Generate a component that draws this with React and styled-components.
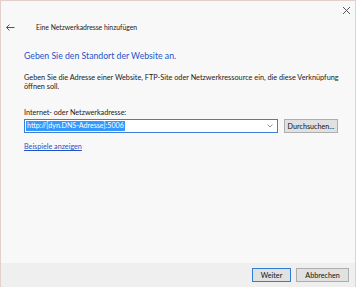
import React from "react";
import styled, { createGlobalStyle } from "styled-components";

const GlobalStyle = createGlobalStyle`
  html, body {
    margin: 0;
    padding: 0;
    background: #f8f8f8;
  }
  #root {
    width: 356px;
    height: 287px;
  }
`;

const Window = styled.div`
  box-sizing: border-box;
  width: 356px;
  height: 287px;
  border: 1px solid #e3cfcc;
  border-bottom: none;
  background: #f8f8f8;
  display: flex;
  flex-direction: column;
  font-family: Lato, "Liberation Sans", sans-serif;
  color: #1a1a1a;
  position: relative;
`;

const Close = styled.button`
  position: absolute;
  top: 3px;
  right: 3px;
  width: 12px;
  height: 12px;
  padding: 0;
  border: none;
  background: none;
  display: flex;
  align-items: center;
  justify-content: center;
`;

const TitleBar = styled.div`
  display: flex;
  align-items: center;
  height: 14px;
  margin-top: 19px;
  padding-left: 5px;
`;

const Back = styled.span`
  width: 30px;
  display: flex;
  align-items: center;
`;

const TitleText = styled.span`
  font-size: 6.8px;
  color: #222;
`;

const Body = styled.div`
  flex: 1;
  padding: 16px 0 0 23px;
  display: flex;
  flex-direction: column;
`;

const Heading = styled.h1`
  margin: 0;
  font-size: 8.7px;
  font-weight: 400;
  color: #1f54c9;
  line-height: 12px;
`;

const Text = styled.p`
  margin: 11px 0 0;
  font-size: 7.3px;
  line-height: 9px;
  width: 322px;
`;

const Label = styled.div`
  margin-top: 17px;
  font-size: 7.2px;
  line-height: 10px;
`;

const Row = styled.div`
  display: flex;
  align-items: center;
  gap: 6px;
  margin-top: 1px;
`;

const Combo = styled.div`
  box-sizing: border-box;
  width: 254px;
  height: 14px;
  border: 1px solid #3d7fd4;
  background: #fff;
  display: flex;
  align-items: center;
  padding: 0 4px 0 1px;
`;

const Selected = styled.span`
  background: #3399ff;
  color: #fff;
  font-size: 7.1px;
  line-height: 10px;
  padding: 0 1px;
`;

const Chevron = styled.span`
  margin-left: auto;
  display: flex;
`;

const Button = styled.button`
  box-sizing: border-box;
  height: 14px;
  padding: 0 3px;
  font-family: Lato, "Liberation Sans", sans-serif;
  font-size: 7.2px;
  color: #111;
  background: #e1e1e1;
  border: 1px solid ${(p) => (p.primary ? "#2f7bd8" : "#adadad")};
  width: ${(p) => p.w}px;
  display: flex;
  align-items: center;
  justify-content: center;
`;

const Link = styled.a`
  margin-top: 9px;
  font-size: 7.2px;
  line-height: 10px;
  color: #1f54c9;
  text-decoration: underline;
`;

const Footer = styled.div`
  height: 24px;
  background: #efefef;
  display: flex;
  justify-content: flex-end;
  align-items: flex-start;
  gap: 5px;
  padding: 5px 6px 0 0;
  box-sizing: border-box;
`;

export default function App() {
  return (
    <>
      <GlobalStyle />
      <Window>
        <Close>
          <svg width="9" height="9" viewBox="0 0 9 9">
            <path d="M1 1L8 8M8 1L1 8" stroke="#555" strokeWidth="1" />
          </svg>
        </Close>
        <TitleBar>
          <Back>
            <svg width="9" height="7" viewBox="0 0 9 7">
              <path d="M0.5 3.5H8.5M3.5 0.5L0.5 3.5L3.5 6.5" stroke="#555" strokeWidth="1" fill="none" />
            </svg>
          </Back>
          <TitleText>Eine Netzwerkadresse hinzufügen</TitleText>
        </TitleBar>
        <Body>
          <Heading>Geben Sie den Standort der Website an.</Heading>
          <Text>
            Geben Sie die Adresse einer Website, FTP-Site oder Netzwerkressource ein, die diese Verknüpfung
            öffnen soll.
          </Text>
          <Label>Internet- oder Netzwerkadresse:</Label>
          <Row>
            <Combo>
              <Selected>http://[dyn.DNS-Adresse]:5006</Selected>
              <Chevron>
                <svg width="6" height="4" viewBox="0 0 6 4">
                  <path d="M0.5 0.5L3 3L5.5 0.5" stroke="#777" strokeWidth="0.8" fill="none" />
                </svg>
              </Chevron>
            </Combo>
            <Button w={54}>Durchsuchen...</Button>
          </Row>
          <Link>Beispiele anzeigen</Link>
        </Body>
        <Footer>
          <Button primary w={39}>Weiter</Button>
          <Button w={53}>Abbrechen</Button>
        </Footer>
      </Window>
    </>
  );
}
